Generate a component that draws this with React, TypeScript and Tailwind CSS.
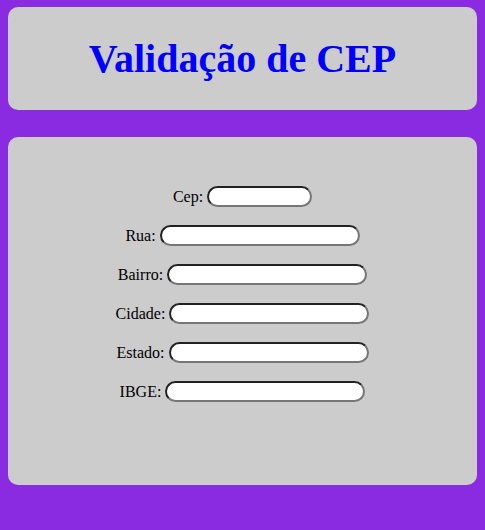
import React, { useState } from 'react';

const campos = [
  { id: 'cep', label: 'Cep:', w: 'w-[105px]' },
  { id: 'rua', label: 'Rua:', w: 'w-[200px]' },
  { id: 'bairro', label: 'Bairro:', w: 'w-[200px]' },
  { id: 'cidade', label: 'Cidade:', w: 'w-[200px]' },
  { id: 'estado', label: 'Estado:', w: 'w-[200px]' },
  { id: 'ibge', label: 'IBGE:', w: 'w-[200px]' },
];

const App: React.FC = () => {
  const [valores, setValores] = useState<Record<string, string>>({});

  return (
    <div className="min-h-[530px] bg-[#8a2be2] px-2 pt-[7px] pb-[45px] font-['Liberation_Serif',serif]">
      {/* Cabeçalho */}
      <div className="flex h-[103px] items-center justify-center rounded-[10px] bg-[#cccccc]">
        <h1 className="text-[40px] font-bold leading-none text-[#0000ff]">Validação de CEP</h1>
      </div>

      {/* Formulário */}
      <div className="mt-[27px] flex h-[348px] flex-col items-center gap-[18px] rounded-[10px] bg-[#cccccc] pt-[49px]">
        {campos.map(c => (
          <div key={c.id} className="flex h-[21px] items-center text-base text-black">
            <label htmlFor={c.id} className="mr-1">{c.label}</label>
            <input
              id={c.id}
              type="text"
              value={valores[c.id] ?? ''}
              onChange={e => setValores({ ...valores, [c.id]: e.target.value })}
              className={`${c.w} h-[21px] rounded-full border-2 border-solid border-[#222] border-r-[#767676] border-b-[#767676] bg-white px-1 text-[13px] outline-none`}
            />
          </div>
        ))}
      </div>
    </div>
  );
};

export default App;
